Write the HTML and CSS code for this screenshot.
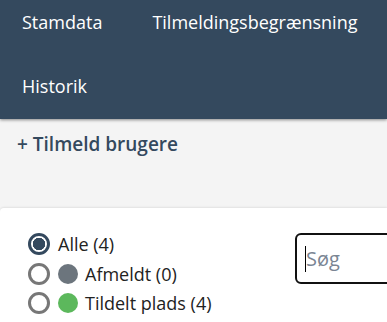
FILE: index.html
```html
<!DOCTYPE html>
<html lang="da">
<head>
<meta charset="utf-8">
<link rel="stylesheet" href="styles.css">
</head>
<body>
<header class="topnav">
  <a class="nav-item" href="#">Stamdata</a>
  <a class="nav-item" href="#">Tilmeldingsbegrænsning</a>
  <a class="nav-item" href="#">Historik</a>
</header>
<section class="actions">
  <a class="add-link" href="#">+ Tilmeld brugere</a>
</section>
<main class="card">
  <div class="filters">
    <label class="radio-row"><span class="radio checked"></span><span class="label">Alle (4)</span></label>
    <label class="radio-row"><span class="radio"></span><span class="dot dot-gray"></span><span class="label">Afmeldt (0)</span></label>
    <label class="radio-row"><span class="radio"></span><span class="dot dot-green"></span><span class="label">Tildelt plads (4)</span></label>
  </div>
  <div class="search-wrap">
    <input class="search" type="text" placeholder="Søg">
    <span class="caret"></span>
  </div>
</main>
</body>
</html>
```
FILE: styles.css
```css
* { box-sizing: border-box; }
html, body { margin: 0; padding: 0; }
body {
  font-family: "Open Sans", "Noto Sans", sans-serif;
  background: #f4f4f4;
  width: 387px;
  height: 322px;
  overflow: hidden;
}
.topnav {
  background: #34495e;
  display: flex;
  flex-wrap: wrap;
  column-gap: 50px;
  row-gap: 38px;
  padding: 9px 0 20px 22px;
  box-shadow: 0 1px 3px rgba(0,0,0,0.45);
  position: relative;
  z-index: 1;
}
.nav-item {
  color: #ffffff;
  text-decoration: none;
  font-size: 18px;
  font-weight: 500;
  line-height: 26px;
  white-space: nowrap;
}
.nav-item:nth-child(2) { margin-right: 10px; }
.actions {
  padding: 12px 17px 0;
  height: 89px;
}
.add-link {
  color: #34495e;
  text-decoration: none;
  font-size: 19px;
  font-weight: 600;
  line-height: 26px;
}
.card {
  background: #ffffff;
  border-radius: 4px 0 0 0;
  box-shadow: 0 -1px 2px rgba(0,0,0,0.08);
  display: flex;
  justify-content: space-between;
  padding: 25px 0 0 28px;
  height: 120px;
}
.filters {
  display: flex;
  flex-direction: column;
  gap: 7.5px;
}
.radio-row {
  display: flex;
  align-items: center;
  height: 22px;
  color: #222222;
  font-size: 18px;
}
.radio {
  width: 22px;
  height: 22px;
  border-radius: 50%;
  border: 3px solid #777777;
  background: #fff;
  margin-right: 8px;
  flex: none;
}
.radio.checked {
  border-color: #34495e;
  background: radial-gradient(circle, #34495e 0 6px, #fff 6.5px);
}
.dot {
  width: 20px;
  height: 20px;
  border-radius: 50%;
  margin-right: 7px;
  flex: none;
}
.dot-gray { background: #6c757d; }
.dot-green { background: #5cb85c; }
.search-wrap {
  width: 92px;
  position: relative;
}
.search {
  width: 120px;
  height: 51px;
  border: 2px solid #111111;
  border-radius: 6px;
  padding: 0 0 0 9px;
  font-family: "Open Sans", "Noto Sans", sans-serif;
  font-size: 20px;
  color: #333;
  outline: none;
  background: #fff;
}
.search::placeholder { color: #7a8593; }
.caret {
  position: absolute;
  left: 10px;
  top: 13px;
  width: 1px;
  height: 26px;
  background: #000;
}
```
